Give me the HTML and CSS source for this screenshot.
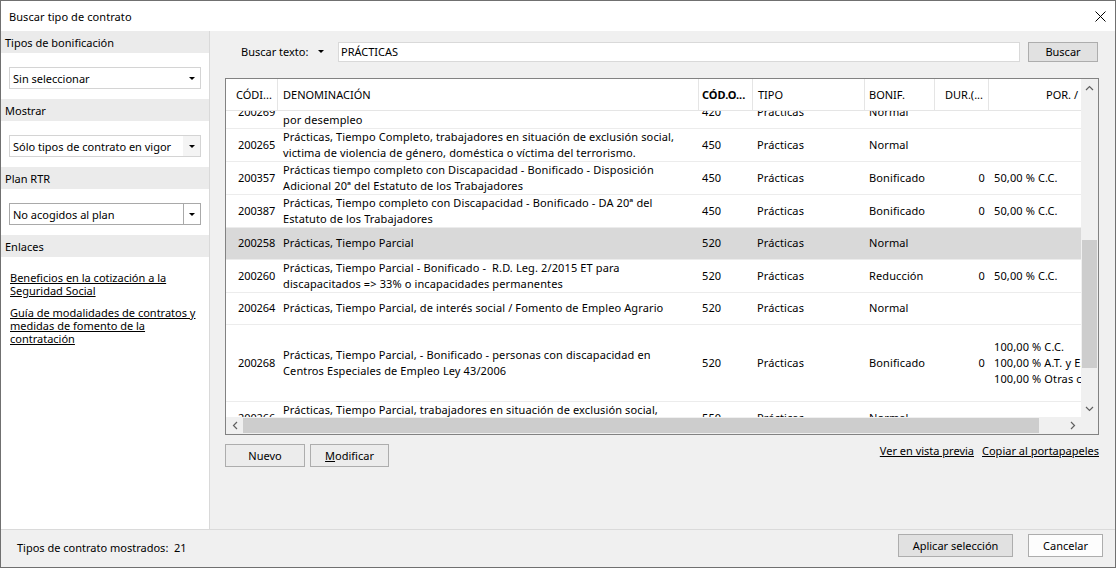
FILE: index.html
```html
<!DOCTYPE html>
<html lang="es">
<head>
<meta charset="utf-8">
<title>Buscar tipo de contrato</title>
<link rel="stylesheet" href="styles.css">
</head>
<body>
<div class="window">
  <header class="titlebar">
    <span class="title">Buscar tipo de contrato</span>
    <svg class="close" width="11" height="11" viewBox="0 0 11 11"><path d="M0.5 0.5L10.5 10.5M10.5 0.5L0.5 10.5" stroke="#000" stroke-width="1" fill="none"/></svg>
  </header>
  <div class="main">
    <aside class="sidebar">
      <div class="band">Tipos de bonificación</div>
      <div class="combo"><span class="combo-text">Sin seleccionar</span><span class="combo-btn"><i class="tri"></i></span></div>
      <div class="band">Mostrar</div>
      <div class="combo combo-grey"><span class="combo-text">Sólo tipos de contrato en vigor</span><span class="combo-btn"><i class="tri"></i></span></div>
      <div class="band">Plan RTR</div>
      <div class="combo combo-split"><span class="combo-text">No acogidos al plan</span><span class="combo-btn"><i class="tri"></i></span></div>
      <div class="band">Enlaces</div>
      <div class="links">
        <a class="link">Beneficios en la cotización a la <br>Seguridad Social</a>
        <a class="link">Guía de modalidades de contratos y<br>medidas de fomento de la <br>contratación</a>
      </div>
    </aside>
    <section class="content">
      <div class="searchrow">
        <span class="search-label">Buscar texto:</span>
        <i class="tri"></i>
        <div class="search-input">PRÁCTICAS</div>
        <div class="btn btn-search">Buscar</div>
      </div>
      <div class="grid">
        <div class="viewport">
          <div class="thead">
            <div class="hc w1 h1">CÓDI...</div>
            <div class="hc w2 h2">DENOMINACIÓN</div>
            <div class="hc w3 h3 bold">CÓD.O...</div>
            <div class="hc w4 h4">TIPO</div>
            <div class="hc w5 h5">BONIF.</div>
            <div class="hc w6 h6">DUR.(...</div>
            <div class="hc w7 h7 last">POR. / BONIF.</div>
          </div>
          <div class="tbody">
            <div class="rows">
              <div class="row r2">
                <div class="c w1 code">200269</div>
                <div class="c w2 den">Prácticas, Tiempo Completo, personas mayores de 45 años en situación<br>por desempleo</div>
                <div class="c w3 cod">420</div>
                <div class="c w4 tipo">Prácticas</div>
                <div class="c w5 bon">Normal</div>
                <div class="c w6 dur"></div>
                <div class="c w7 por"></div>
              </div>
              <div class="row r2">
                <div class="c w1 code">200265</div>
                <div class="c w2 den">Prácticas, Tiempo Completo, trabajadores en situación de exclusión social,<br>victima de violencia de género, doméstica o víctima del terrorismo.</div>
                <div class="c w3 cod">450</div>
                <div class="c w4 tipo">Prácticas</div>
                <div class="c w5 bon">Normal</div>
                <div class="c w6 dur"></div>
                <div class="c w7 por"></div>
              </div>
              <div class="row r2">
                <div class="c w1 code">200357</div>
                <div class="c w2 den">Prácticas tiempo completo con Discapacidad - Bonificado - Disposición<br>Adicional 20ª del Estatuto de los Trabajadores</div>
                <div class="c w3 cod">450</div>
                <div class="c w4 tipo">Prácticas</div>
                <div class="c w5 bon">Bonificado</div>
                <div class="c w6 dur">0</div>
                <div class="c w7 por">50,00 % C.C.</div>
              </div>
              <div class="row r2">
                <div class="c w1 code">200387</div>
                <div class="c w2 den">Prácticas, Tiempo completo con Discapacidad - Bonificado - DA 20ª del<br>Estatuto de los Trabajadores</div>
                <div class="c w3 cod">450</div>
                <div class="c w4 tipo">Prácticas</div>
                <div class="c w5 bon">Bonificado</div>
                <div class="c w6 dur">0</div>
                <div class="c w7 por">50,00 % C.C.</div>
              </div>
              <div class="row r1 selected">
                <div class="c w1 code">200258</div>
                <div class="c w2 den">Prácticas, Tiempo Parcial</div>
                <div class="c w3 cod">520</div>
                <div class="c w4 tipo">Prácticas</div>
                <div class="c w5 bon">Normal</div>
                <div class="c w6 dur"></div>
                <div class="c w7 por"></div>
              </div>
              <div class="row r2">
                <div class="c w1 code">200260</div>
                <div class="c w2 den">Prácticas, Tiempo Parcial - Bonificado - &nbsp;R.D. Leg. 2/2015 ET para<br>discapacitados =&gt; 33% o incapacidades permanentes</div>
                <div class="c w3 cod">520</div>
                <div class="c w4 tipo">Prácticas</div>
                <div class="c w5 bon">Reducción</div>
                <div class="c w6 dur">0</div>
                <div class="c w7 por">50,00 % C.C.</div>
              </div>
              <div class="row r1">
                <div class="c w1 code">200264</div>
                <div class="c w2 den">Prácticas, Tiempo Parcial, de interés social / Fomento de Empleo Agrario</div>
                <div class="c w3 cod">520</div>
                <div class="c w4 tipo">Prácticas</div>
                <div class="c w5 bon">Normal</div>
                <div class="c w6 dur"></div>
                <div class="c w7 por"></div>
              </div>
              <div class="row r5">
                <div class="c w1 code">200268</div>
                <div class="c w2 den">Prácticas, Tiempo Parcial, - Bonificado - personas con discapacidad en<br>Centros Especiales de Empleo Ley 43/2006</div>
                <div class="c w3 cod">520</div>
                <div class="c w4 tipo">Prácticas</div>
                <div class="c w5 bon">Bonificado</div>
                <div class="c w6 dur">0</div>
                <div class="c w7 por">100,00 % C.C.<br>100,00 % A.T. y E.P.<br>100,00 % Otras cuotas</div>
              </div>
              <div class="row r2">
                <div class="c w1 code">200266</div>
                <div class="c w2 den">Prácticas, Tiempo Parcial, trabajadores en situación de exclusión social,<br>victima de violencia de género, doméstica o víctima del terrorismo.</div>
                <div class="c w3 cod">550</div>
                <div class="c w4 tipo">Prácticas</div>
                <div class="c w5 bon">Normal</div>
                <div class="c w6 dur"></div>
                <div class="c w7 por"></div>
              </div>
            </div>
          </div>
        </div>
        <div class="vscroll">
          <div class="sb-btn"><svg width="9" height="6" viewBox="0 0 9 6"><path d="M1 5L4.5 1.5L8 5" stroke="#606060" stroke-width="1.2" fill="none"/></svg></div>
          <div class="vtrack"><div class="vthumb"></div></div>
          <div class="sb-btn"><svg width="9" height="6" viewBox="0 0 9 6"><path d="M1 1L4.5 4.5L8 1" stroke="#606060" stroke-width="1.2" fill="none"/></svg></div>
        </div>
        <div class="hscroll">
          <div class="sb-btn"><svg width="6" height="9" viewBox="0 0 6 9"><path d="M5 1L1.5 4.5L5 8" stroke="#606060" stroke-width="1.2" fill="none"/></svg></div>
          <div class="htrack"><div class="hthumb"></div></div>
          <div class="sb-btn"><svg width="6" height="9" viewBox="0 0 6 9"><path d="M1 1L4.5 4.5L1 8" stroke="#606060" stroke-width="1.2" fill="none"/></svg></div>
        </div>
        <div class="corner"></div>
      </div>
      <div class="actions">
        <div class="btn btn-nuevo">Nuevo</div>
        <div class="btn btn-mod"><span><u>M</u>odificar</span></div>
        <div class="action-links">
          <a class="link">Ver en vista previa</a>
          <a class="link">Copiar al portapapeles</a>
        </div>
      </div>
    </section>
  </div>
  <footer class="footer">
    <span class="count">Tipos de contrato mostrados:&nbsp; 21</span>
    <div class="btn btn-apply">Aplicar selección</div>
    <div class="btn btn-cancel">Cancelar</div>
  </footer>
</div>
</body>
</html>
```

FILE: styles.css
```css
* { box-sizing: border-box; }
html, body { margin: 0; padding: 0; }
body {
  font-family: "Noto Sans", "Open Sans", sans-serif;
  font-size: 11px;
  color: #000;
  background: #fff;
}
.window {
  width: 1116px;
  height: 568px;
  border: 1px solid #707070;
  display: flex;
  flex-direction: column;
  background: #f0f0f0;
  overflow: hidden;
}
.titlebar {
  height: 30px;
  flex: none;
  background: #fff;
  display: flex;
  align-items: center;
  justify-content: space-between;
  padding: 0 9px 0 8px;
}
.title { letter-spacing: 0.08px; }
.close { display: block; }
.main {
  height: 498px;
  flex: none;
  display: flex;
}
.sidebar {
  width: 209px;
  flex: none;
  background: #fff;
  border-right: 1px solid #d9d9d9;
}
.band {
  height: 22px;
  background: #ebebeb;
  padding-left: 4px;
  display: flex;
  align-items: center;
}
.combo {
  margin: 14px 8px 10px 8px;
  height: 22px;
  border: 1px solid #d4d4d4;
  background: #fff;
  display: flex;
  align-items: stretch;
}
.combo-text {
  flex: 1;
  padding-left: 3px;
  display: flex;
  align-items: center;
  white-space: nowrap;
  overflow: hidden;
}
.combo-btn {
  width: 17px;
  flex: none;
  display: flex;
  align-items: center;
  justify-content: center;
}
.combo-grey .combo-btn { background: #f4f4f4; }
.combo-split { border-color: #a9a9a9; }
.combo-split .combo-btn { border-left: 1px solid #a9a9a9; }
.tri {
  display: block;
  width: 0;
  height: 0;
  border-left: 3px solid transparent;
  border-right: 3px solid transparent;
  border-top: 3px solid #000;
}
.links {
  padding: 14px 8px 0 9px;
  display: flex;
  flex-direction: column;
  gap: 9px;
}
.link {
  color: #000;
  text-decoration: underline;
  line-height: 13px;
  white-space: nowrap;
}
.content {
  flex: 1;
  display: flex;
  flex-direction: column;
  padding: 10px 16px 0 15px;
}
.searchrow {
  display: flex;
  align-items: center;
  height: 21px;
  padding-left: 16px;
  padding-right: 1px;
}
.search-label {
  width: 77px;
  flex: none;
  white-space: nowrap;
}
.search-input {
  margin-left: 14px;
  flex: 1;
  height: 20px;
  border: 1px solid #d9d9d9;
  background: #fff;
  padding-left: 2px;
  display: flex;
  align-items: center;
}
.btn {
  border: 1px solid #adadad;
  background: #e1e1e1;
  display: flex;
  align-items: center;
  justify-content: center;
  white-space: nowrap;
}
.btn u { text-decoration: underline; }
.btn-search {
  margin-left: 8px;
  width: 70px;
  height: 20px;
}
.grid {
  margin-top: 16px;
  height: 357px;
  border: 1px solid #828282;
  background: #fff;
  display: grid;
  grid-template-columns: 855px 17px;
  grid-template-rows: 338px 17px;
}
.viewport {
  overflow: hidden;
  display: flex;
  flex-direction: column;
}
.thead {
  display: flex;
  height: 32px;
  flex: none;
  border-bottom: 1px solid #e5e5e5;
  position: relative;
  z-index: 1;
  background: #fff;
}
.hc {
  height: 31px;
  border-right: 1px solid #e5e5e5;
  display: flex;
  align-items: center;
  white-space: nowrap;
  overflow: hidden;
  flex: none;
}
.hc.last { border-right: none; }
.bold { font-weight: bold; }
.w1 { width: 52px; }
.w2 { width: 421px; }
.w3 { width: 54px; }
.w4 { width: 112px; }
.w5 { width: 70px; }
.w6 { width: 54px; }
.w7 { width: 140px; }
.h1 { padding-left: 10px; }
.h2 { padding-left: 5px; }
.h3 { padding-left: 3px; }
.h4 { padding-left: 5px; }
.h5 { padding-left: 4px; }
.h6 { justify-content: flex-end; padding-right: 5px; }
.h7 { padding-left: 57px; }
.tbody {
  flex: 1;
  overflow: hidden;
}
.rows { margin-top: -15px; letter-spacing: 0.12px; }
.row {
  display: flex;
  border-bottom: 1px solid #ececec;
}
.r1 { height: 32px; }
.r2 { height: 33px; }
.r5 { height: 77px; }
.selected { background: #d9d9d9; }
.c {
  flex: none;
  display: flex;
  align-items: center;
  white-space: nowrap;
  overflow: hidden;
  line-height: 16px;
  padding-bottom: 1px;
}
.code { padding-left: 12px; letter-spacing: -0.1px; }
.den { padding-left: 5px; }
.cod { padding-left: 3px; }
.tipo { padding-left: 4px; }
.bon { padding-left: 4px; }
.dur { justify-content: flex-end; padding-right: 4px; }
.por { padding-left: 5px; }
.vscroll {
  background: #f0f0f0;
  display: flex;
  flex-direction: column;
}
.sb-btn {
  width: 17px;
  height: 17px;
  flex: none;
  display: flex;
  align-items: center;
  justify-content: center;
}
.vtrack { flex: 1; }
.vthumb {
  margin-top: 144px;
  margin-left: 1px;
  width: 15px;
  height: 128px;
  background: #cdcdcd;
}
.hscroll {
  background: #f0f0f0;
  display: flex;
}
.htrack { flex: 1; }
.hthumb {
  margin-top: 1px;
  width: 796px;
  height: 15px;
  background: #cdcdcd;
}
.corner { background: #f0f0f0; }
.actions {
  margin-top: 9px;
  height: 23px;
  display: flex;
  align-items: flex-start;
}
.btn-nuevo {
  width: 80px;
  height: 23px;
  background: #ececec;
}
.btn-mod {
  margin-left: 5px;
  width: 79px;
  height: 23px;
  background: #ececec;
}
.action-links {
  margin-left: auto;
  display: flex;
  gap: 8px;
}
.footer {
  height: 38px;
  flex: none;
  border-top: 1px solid #dadada;
  background: #f0f0f0;
  display: flex;
  align-items: flex-start;
  padding: 4px 12px 0 16px;
}
.count {
  flex: 1;
  height: 23px;
  display: flex;
  align-items: center;
  padding-top: 3px;
}
.btn-apply {
  width: 115px;
  height: 23px;
  background: #e1e1e1;
}
.btn-cancel {
  margin-left: 15px;
  width: 75px;
  height: 23px;
  background: #fdfdfd;
}
```
